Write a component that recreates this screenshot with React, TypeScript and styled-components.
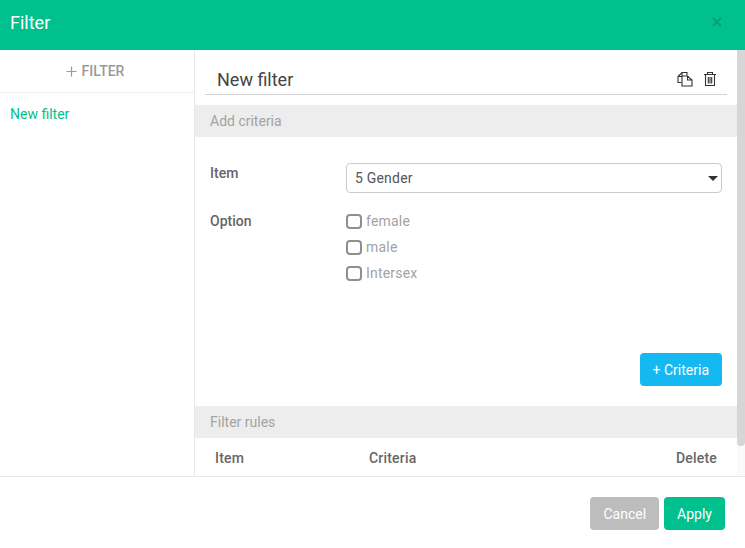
import styled, { createGlobalStyle } from 'styled-components'

const options = ['female', 'male', 'Intersex']

export default function App() {
	return (
		<>
			<GlobalStyle />
			<Modal>
				<Header>
					<HeaderTitle>Filter</HeaderTitle>
					<CloseButton aria-label="close">
						<svg width="10" height="10" viewBox="0 0 10 10">
							<path d="M1 1l8 8M9 1l-8 8" stroke="currentColor" strokeWidth="1.6" />
						</svg>
					</CloseButton>
				</Header>

				<Body>
					<Sidebar>
						<AddFilter>
							<svg width="11" height="11" viewBox="0 0 11 11">
								<path d="M5.5 0.5v10M0.5 5.5h10" stroke="currentColor" strokeWidth="1.2" />
							</svg>
							FILTER
						</AddFilter>
						<FilterLink>New filter</FilterLink>
					</Sidebar>

					<Content>
						<TitleRow>
							<TitleText>New filter</TitleText>
							<TitleIcons>
								<svg width="16" height="16" viewBox="0 0 16 16" fill="none" stroke="#333" strokeWidth="1.1">
									<path d="M4.5 11.5H1V5.5L5 1.5H10V4.5" />
									<path d="M5 1.5V5.5H1" />
									<path d="M5 5H10.5L15 9V15H5ZM10.5 5V9H15" fill="#fff" />
								</svg>
								<svg width="14" height="16" viewBox="0 0 14 16" fill="none" stroke="#333" strokeWidth="1.1">
									<path d="M1 3.5H13M4.5 3.5V1.5H9.5V3.5M2.5 3.5V14.5H11.5V3.5M5.3 6V12.5M7 6V12.5M8.7 6V12.5" />
								</svg>
							</TitleIcons>
						</TitleRow>

						<SectionBar>Add criteria</SectionBar>

						<Form>
							<FormRow>
								<FormLabel>Item</FormLabel>
								<SelectBox>
									5 Gender
									<Caret />
								</SelectBox>
							</FormRow>
							<OptionRow>
								<FormLabel>Option</FormLabel>
								<OptionList>
									{options.map((option) => (
										<OptionItem key={option}>
											<CheckBox />
											{option}
										</OptionItem>
									))}
								</OptionList>
							</OptionRow>
						</Form>

						<CriteriaActions>
							<Button $color="#14b9f1">+ Criteria</Button>
						</CriteriaActions>

						<SectionBar>Filter rules</SectionBar>

						<RulesHead>
							<span>Item</span>
							<span>Criteria</span>
							<span>Delete</span>
						</RulesHead>
					</Content>

					<ScrollTrack>
						<ScrollThumb />
					</ScrollTrack>
				</Body>

				<Footer>
					<Button $color="#bdbdbd">Cancel</Button>
					<Button $color="#00c08e">Apply</Button>
				</Footer>
			</Modal>
		</>
	)
}

const GlobalStyle = createGlobalStyle`
	html, body {
		margin: 0;
		background: #fff;
	}

	body {
		font-family: Roboto, 'Liberation Sans', sans-serif;
	}
`

const Modal = styled.div`
	width: 745px;
	height: 548px;
	display: flex;
	flex-direction: column;
	overflow: hidden;
`

const Header = styled.div`
	height: 50px;
	flex: none;
	padding: 0 23px 6px 10px;
	box-sizing: border-box;
	display: flex;
	align-items: center;
	justify-content: space-between;
	background: #00c08e;
`

const HeaderTitle = styled.div`
	color: #fff;
	font-size: 18px;
`

const CloseButton = styled.div`
	display: flex;
	color: #049a74;
`

const Body = styled.div`
	height: 426px;
	flex: none;
	display: flex;
`

const Sidebar = styled.div`
	width: 195px;
	flex: none;
	box-sizing: border-box;
	border-right: 1px solid #e8e8e8;
`

const AddFilter = styled.div`
	height: 43px;
	box-sizing: border-box;
	display: flex;
	align-items: center;
	justify-content: center;
	gap: 5px;
	padding-right: 4px;
	border-bottom: 1px solid #ececec;
	color: #999;
	font-size: 14px;
	font-weight: 500;
`

const FilterLink = styled.div`
	padding: 13px 10px;
	color: #00c08e;
	font-size: 14px;
	line-height: 16px;
`

const Content = styled.div`
	flex: 1;
	min-width: 0;
	overflow: hidden;
`

const ScrollTrack = styled.div`
	width: 8px;
	flex: none;
	background: #fafafa;
`

const ScrollThumb = styled.div`
	height: 396px;
	border-radius: 0 0 4px 4px;
	background: #d6d6d6;
`

const TitleRow = styled.div`
	height: 45px;
	margin: 0 10px 10px;
	padding: 0 10px 0 12px;
	box-sizing: border-box;
	display: flex;
	align-items: flex-end;
	justify-content: space-between;
	border-bottom: 1px solid #d4d4d4;
`

const TitleText = styled.div`
	color: #444;
	font-size: 18px;
	line-height: 28px;
`

const TitleIcons = styled.div`
	display: flex;
	align-items: center;
	gap: 10px;
	margin-bottom: 7px;
`

const SectionBar = styled.div`
	height: 32px;
	padding: 0 15px;
	display: flex;
	align-items: center;
	background: #ededed;
	color: #a3a3a3;
	font-size: 14px;
`

const Form = styled.div`
	padding: 26px 15px 0;
	height: 216px;
	box-sizing: border-box;
`

const FormRow = styled.div`
	display: grid;
	grid-template-columns: 136px 1fr;
	margin-bottom: 18px;
`

const OptionRow = styled(FormRow)`
	margin-bottom: 0;
`

const FormLabel = styled.div`
	color: #666;
	font-size: 14px;
	font-weight: 500;
	line-height: 20px;
`

const SelectBox = styled.div`
	position: relative;
	height: 30px;
	box-sizing: border-box;
	padding-left: 8px;
	display: flex;
	align-items: center;
	border: 1px solid #ccc;
	border-radius: 4px;
	color: #555;
	font-size: 14px;
	letter-spacing: 0.2px;
`

const Caret = styled.span`
	position: absolute;
	right: 3px;
	top: 12px;
	border-left: 5px solid transparent;
	border-right: 5px solid transparent;
	border-top: 5px solid #333;
`

const OptionList = styled.div`
	display: flex;
	flex-direction: column;
	gap: 6px;
`

const OptionItem = styled.div`
	height: 20px;
	display: flex;
	align-items: center;
	gap: 4px;
	color: #a3a3a3;
	font-size: 14px;
	letter-spacing: 0.2px;
`

const CheckBox = styled.span`
	width: 16px;
	height: 15px;
	box-sizing: border-box;
	border: 2px solid #8f8f8f;
	border-radius: 4px;
`

const CriteriaActions = styled.div`
	height: 53px;
	padding: 0 15px;
	box-sizing: border-box;
	display: flex;
	justify-content: flex-end;
`

const RulesHead = styled.div`
	height: 70px;
	padding: 10px 20px 0;
	box-sizing: border-box;
	display: grid;
	grid-template-columns: 154px 1fr auto;
	color: #666;
	font-size: 14px;
	font-weight: 500;
	line-height: 20px;
	letter-spacing: 0.2px;
`

const Footer = styled.div`
	height: 72px;
	flex: none;
	padding: 20px 20px 0 0;
	box-sizing: border-box;
	display: flex;
	justify-content: flex-end;
	gap: 5px;
	border-top: 1px solid #e8e8e8;
`

const Button = styled.div<{ $color: string }>`
	height: 33px;
	padding: 0 13px;
	display: flex;
	align-items: center;
	border-radius: 4px;
	background: ${(p) => p.$color};
	color: #fff;
	font-size: 14px;
`
